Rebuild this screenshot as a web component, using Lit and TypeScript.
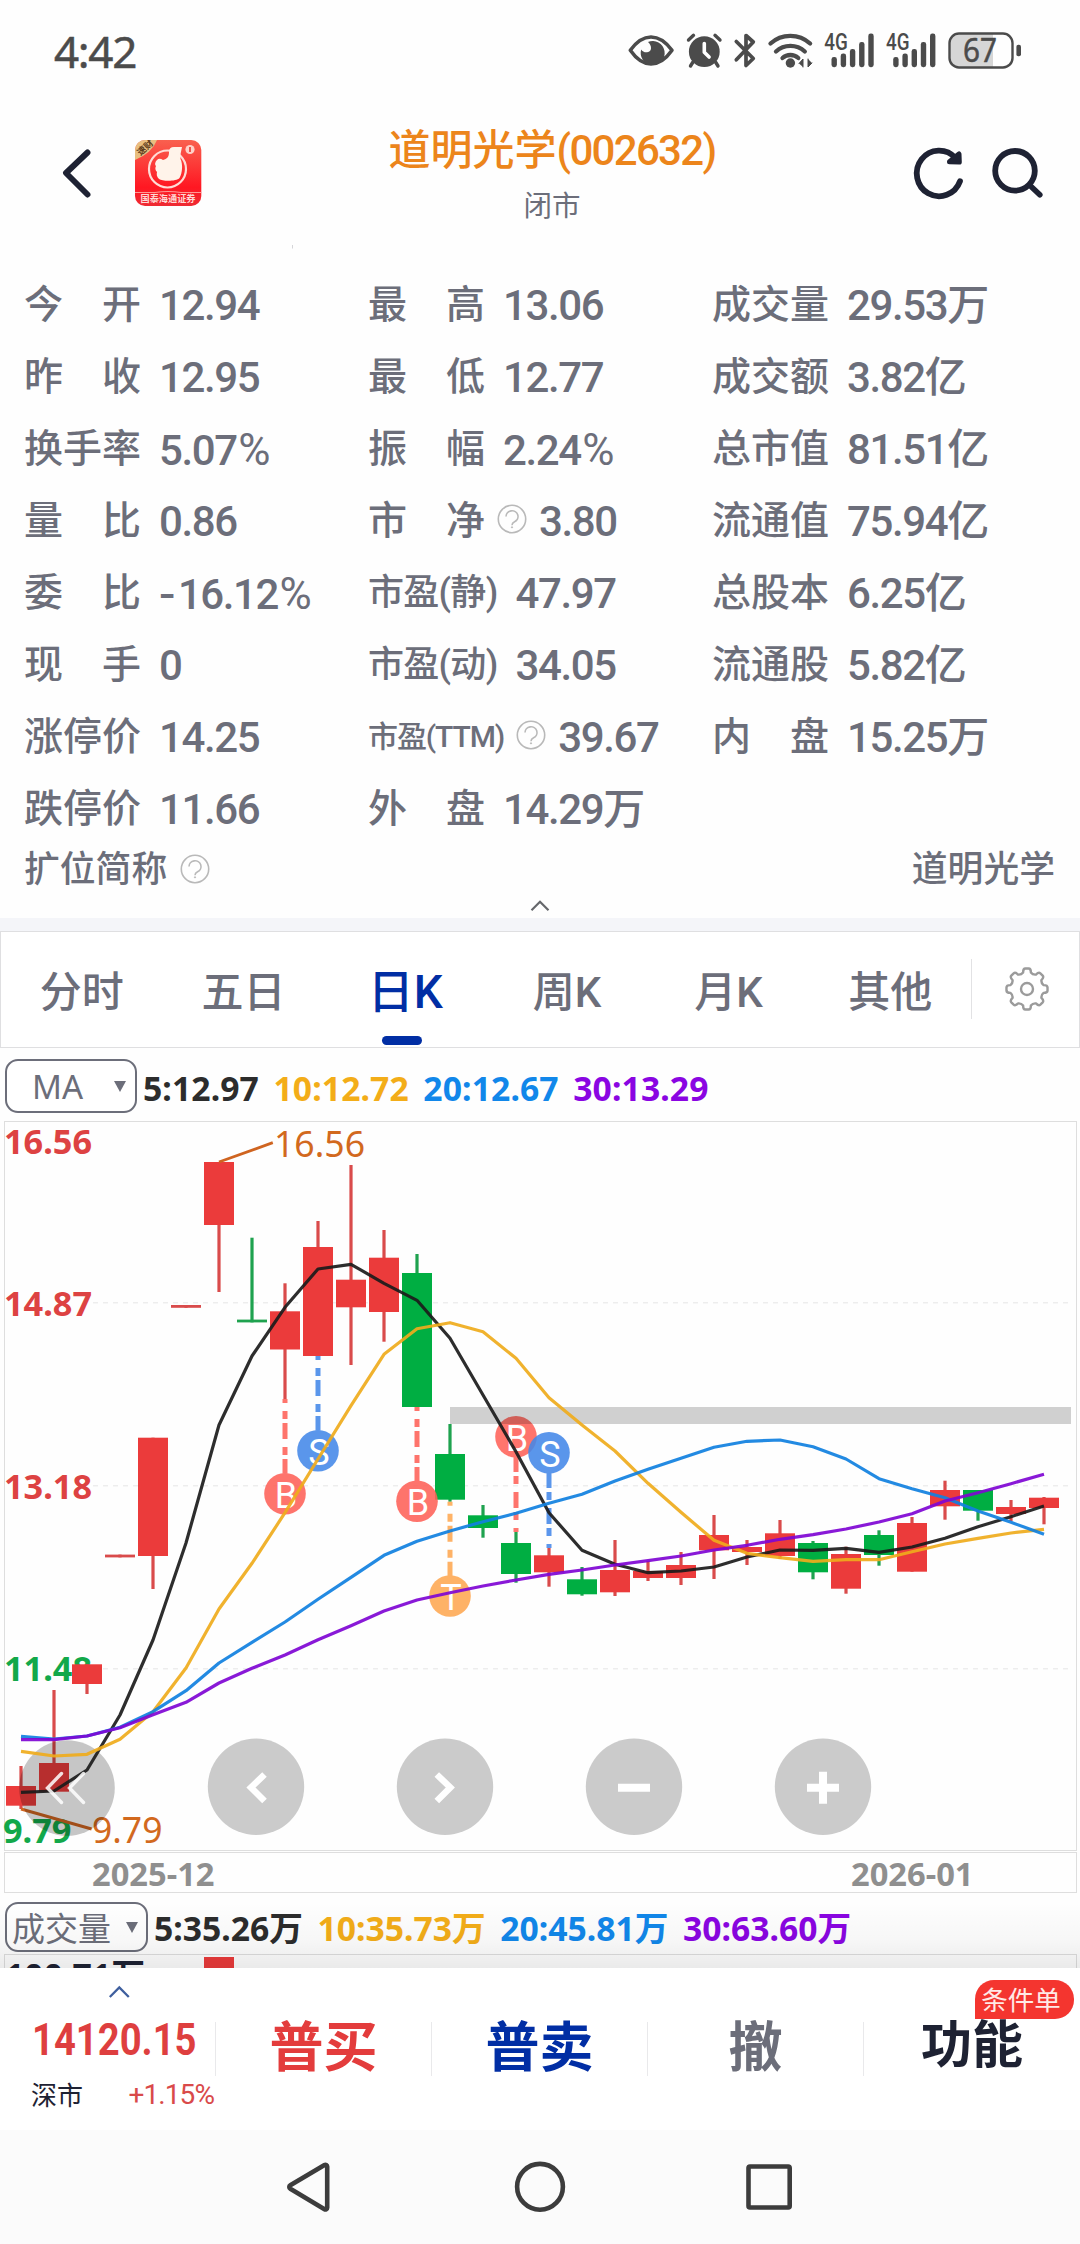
import { LitElement, html, svg, css, nothing } from "lit";
import { customElement, property } from "lit/decorators.js";

type Quote = { label: string; value: string; help?: boolean; size?: "mid" | "small" };

const QUOTES: Quote[][] = [
  [
    { label: "今　开", value: "12.94" },
    { label: "昨　收", value: "12.95" },
    { label: "换手率", value: "5.07%" },
    { label: "量　比", value: "0.86" },
    { label: "委　比", value: "-16.12%" },
    { label: "现　手", value: "0" },
    { label: "涨停价", value: "14.25" },
    { label: "跌停价", value: "11.66" },
  ],
  [
    { label: "最　高", value: "13.06" },
    { label: "最　低", value: "12.77" },
    { label: "振　幅", value: "2.24%" },
    { label: "市　净", value: "3.80", help: true },
    { label: "市盈(静)", value: "47.97", size: "mid" },
    { label: "市盈(动)", value: "34.05", size: "mid" },
    { label: "市盈(TTM)", value: "39.67", help: true, size: "small" },
    { label: "外　盘", value: "14.29万" },
  ],
  [
    { label: "成交量", value: "29.53万" },
    { label: "成交额", value: "3.82亿" },
    { label: "总市值", value: "81.51亿" },
    { label: "流通值", value: "75.94亿" },
    { label: "总股本", value: "6.25亿" },
    { label: "流通股", value: "5.82亿" },
    { label: "内　盘", value: "15.25万" },
  ],
];

const TABS = ["分时", "五日", "日K", "周K", "月K", "其他"];

const RED = "#eb3b3b";
const GREEN = "#00ae42";

/* direction, high, body top, body bottom, low */
const CANDLES: [string, number, number, number, number][] = [
  ["r", 1766, 1786, 1805.7, 1809],
  ["r", 1690, 1763, 1791.7, 1791.7],
  ["r", 1664.3, 1664.3, 1684, 1694],
  ["r", 1554.6, 1554.6, 1557.4, 1557.4],
  ["r", 1437.7, 1437.7, 1556, 1589],
  ["r", 1305, 1305, 1307.8, 1307.8],
  ["r", 1162, 1162, 1225, 1292],
  ["g", 1237.7, 1319.6, 1322.4, 1322.4],
  ["r", 1283.3, 1311.3, 1349.5, 1399],
  ["r", 1221, 1247, 1356, 1356],
  ["r", 1165, 1279.7, 1307.3, 1365],
  ["r", 1230, 1257.7, 1312, 1341.7],
  ["g", 1254, 1273, 1407, 1407],
  ["g", 1424, 1454, 1499.7, 1501.7],
  ["g", 1505, 1515.3, 1528, 1537.7],
  ["g", 1532, 1543, 1574, 1582.7],
  ["r", 1548, 1555.3, 1572.3, 1586.7],
  ["g", 1567, 1579.3, 1594.3, 1595.7],
  ["r", 1540, 1570, 1592.3, 1596],
  ["r", 1561, 1571, 1578, 1581],
  ["r", 1552, 1565, 1578, 1585],
  ["r", 1515, 1535, 1550.3, 1579],
  ["r", 1540, 1547, 1552, 1565],
  ["r", 1520, 1533.3, 1556, 1559],
  ["g", 1541, 1543, 1572.3, 1579.3],
  ["r", 1546.7, 1554, 1588.7, 1593.7],
  ["g", 1530.3, 1535, 1555, 1565.7],
  ["r", 1517, 1523, 1571.7, 1571.7],
  ["r", 1480.7, 1490, 1506.3, 1519.7],
  ["g", 1490, 1490, 1510.7, 1520.7],
  ["r", 1500, 1507, 1514, 1521],
  ["r", 1497, 1497.7, 1508, 1524.3],
];

const AVERAGES: { color: string; ys: number[] }[] = [
  {
    color: "#1b1b1b",
    ys: [1792.3, 1791, 1770, 1715, 1640, 1543, 1425, 1356, 1307.3, 1269, 1264.3, 1283.3, 1300.3, 1338.3, 1395, 1451.7,
      1512.7, 1550.3, 1564.3, 1572.7, 1571, 1567, 1557, 1550, 1550.3, 1548.3, 1552.3, 1547, 1538.3, 1526.7, 1516.7, 1506],
  },
  {
    color: "#efab1c",
    ys: [1751.3, 1756, 1754.3, 1739.3, 1711.7, 1668, 1609, 1563.3, 1512.7, 1459, 1405.7, 1354.3, 1328.7, 1322.7, 1331.7,
      1358.3, 1397.7, 1425, 1451, 1483.3, 1512.3, 1540.3, 1553.3, 1557.7, 1561.3, 1559.7, 1559.7, 1551.7, 1544, 1538.3,
      1533, 1529.3],
  },
  {
    color: "#1080e0",
    ys: [1736.3, 1739, 1736, 1727.3, 1711.7, 1690.7, 1663, 1642.3, 1622, 1599.3, 1577.3, 1555.3, 1541.3, 1531, 1521.7,
      1513.3, 1503.3, 1494.3, 1481, 1469.3, 1458.3, 1447.3, 1441.3, 1440, 1446.7, 1459, 1478.7, 1488.7, 1497.7, 1511,
      1522.3, 1534.3],
  },
  {
    color: "#7f05d4",
    ys: [1739.7, 1739.7, 1736, 1727.7, 1714.7, 1702.3, 1683, 1668.3, 1655, 1639.7, 1625.7, 1611, 1600, 1592.7, 1586,
      1580, 1574.3, 1570, 1565, 1560.7, 1556, 1550, 1545.3, 1539.3, 1534.7, 1529, 1522, 1513.7, 1501, 1492.7, 1483.7,
      1474.3],
  },
];

/* candle index, letter, circle centre, where the dashed stem leaves the candle */
const MARKERS: { i: number; t: string; y: number; from: number; color: string }[] = [
  { i: 8, t: "B", y: 1493.7, from: 1399, color: "#ff6259" },
  { i: 9, t: "S", y: 1450.7, from: 1356, color: "#4488e9" },
  { i: 12, t: "B", y: 1501.3, from: 1407, color: "#ff6259" },
  { i: 13, t: "T", y: 1596, from: 1501.7, color: "#ffa852" },
  { i: 15, t: "B", y: 1436.7, from: 1532, color: "#ff6259" },
  { i: 16, t: "S", y: 1452.7, from: 1548, color: "#4488e9" },
];

const cx = (i: number) => 21 + 33 * i;

@customElement("help-mark")
class HelpMark extends LitElement {
  static styles = css`
    :host { display: block; width: 30px; height: 30px; }
    svg { display: block; }
  `;
  render() {
    return html`<svg width="30" height="30" viewBox="0 0 30 30" fill="none" stroke="#b9b9b9" stroke-width="1.6">
      <circle cx="15" cy="15" r="13.7" />
      <path d="M9 12.6a6 5.8 0 1 1 8.6 5.2c-1.8.9-2.6 1.6-2.6 3.4" />
      <circle cx="15" cy="23.3" r=".6" fill="#b9b9b9" stroke-width="1" />
    </svg>`;
  }
}

@customElement("status-bar")
class StatusBar extends LitElement {
  static styles = css`
    :host { display: flex; justify-content: space-between; height: 102px; color: #4b4b4b; }
    .time { padding-left: 54px; font: 400 44px/102px "Noto Sans", sans-serif; letter-spacing: -1.3px; -webkit-text-stroke: 0.5px #4b4b4b; }
    svg { display: block; }
    .net { font: 500 23px Roboto, sans-serif; }
    .bat { font: 400 32px "Noto Sans", sans-serif; }
  `;
  private bars(x: number) {
    const tops = [57, 53.5, 49, 42, 33.5];
    return svg`<g fill="#4b4b4b">
      <text class="net" x=${x} y="50" textLength="23.5" lengthAdjust="spacingAndGlyphs">4G</text>
      ${tops.map((t, i) => svg`<rect x=${x + 7.2 + i * 9.2} y=${t} width="5.4" height=${67.2 - t} rx="2.4" />`)}
    </g>`;
  }
  render() {
    return html`
      <div class="time">4:42</div>
      <svg width="460" height="102" viewBox="620 0 460 102" fill="none" stroke="#4b4b4b" stroke-linecap="round" stroke-linejoin="round">
        <path d="M630.3 50.3C637 41 644 37 651 37s14.200 4 21 13.300C665.200 60 658 64 651 64s-14-4-20.700-13.700z" stroke-width="3.600" />
        <path d="M648 42a12 12 0 1 1-6.800 7.500c2 4 9.800 4 9.800-1.500 0-2.500-1.200-4.500-3-6z" fill="#4b4b4b" stroke="none" />
        <circle cx="704.3" cy="51.700" r="15.400" fill="#4b4b4b" stroke="none" />
        <path d="M688.500 40l5-4.700M720 40l-5-4.700M693 62l-2.500 4M715.500 62l2.500 4" stroke-width="3.400" />
        <path d="M704.300 43.500v8.800l4.800 4.700" stroke="#fff" stroke-width="3.600" />
        <path d="M736.300 41.500l17 17-7.300 7V35.500l7.300 6.500-17 17.800" stroke-width="3.700" />
        <path d="M770.500 43.500c11-10.300 28.600-10.300 39.600 0M776 51.500c8-7.500 20.800-7.500 28.800 0M782.500 58c4.500-4 11.300-4 15.800 0" stroke-width="4.300" />
        <circle cx="790.400" cy="63" r="4.700" fill="#4b4b4b" stroke="none" />
        <path d="M799 63.500l4-4.500v8M812 63l-4 4v-8" fill="#4b4b4b" stroke-width="1" />
        <g stroke="none">${this.bars(824.3)}${this.bars(886)}</g>
        <path d="M959 34h34v33h-34a9 9 0 0 1-9-9V43a9 9 0 0 1 9-9z" fill="#d6d6d6" stroke="none" />
        <rect x="949.500" y="33.500" width="63" height="34" rx="9.500" stroke-width="2.400" />
        <rect x="1016.400" y="44.700" width="4.600" height="11.600" rx="2" fill="#4b4b4b" stroke="none" />
        <text class="bat" x="963" y="62" fill="#4b4b4b" stroke-width=".5" textLength="34" lengthAdjust="spacingAndGlyphs">67</text>
      </svg>`;
  }
}

@customElement("title-bar")
class TitleBar extends LitElement {
  static styles = css`
    :host { display: grid; grid-template-columns: 360px 384px 336px; height: 158px; font-family: Roboto, "Noto Sans CJK SC", sans-serif; }
    svg { display: block; }
    .mid { display: flex; flex-direction: column; align-items: center; }
    .name { margin-top: 23px; font-size: 42px; line-height: 52px; color: #ec851b; font-weight: 500; white-space: nowrap; }
    .code { letter-spacing: -1.7px; }
    .state { margin-top: 15px; font-size: 28.500px; line-height: 30px; color: #6c6e7a; }
    .mini { font: 700 9.500px "Noto Sans CJK SC", sans-serif; }
    .tag { font: 700 9px "Noto Sans CJK SC", sans-serif; }
  `;
  render() {
    return html`
      <svg width="360" height="158" viewBox="0 102 360 158" fill="none">
        <path d="M87.500 152.500L66 173l21.500 21.500" stroke="#1e2233" stroke-width="5.900" stroke-linecap="round" stroke-linejoin="round" />
        <defs>
          <linearGradient id="lg" x1="0" y1="0" x2="0" y2="1">
            <stop offset="0" stop-color="#f9604f" /><stop offset=".72" stop-color="#ff1722" /><stop offset="1" stop-color="#ee2b33" />
          </linearGradient>
          <clipPath id="lc"><rect x="135" y="140" width="66.300" height="66" rx="10" /></clipPath>
        </defs>
        <g clip-path="url(#lc)">
          <rect x="135" y="140" width="67" height="66" fill="url(#lg)" />
          <circle cx="167.500" cy="169" r="18.500" stroke="#ffdcd6" stroke-width="2.200" />
          <path d="M157 160c2-2 4-1 6 0 4-1 6-3 6-8q0-5 5-5h8c-1 5-2 8-1.500 12 2.500 5 2 14-1 19-3 3.500-17 3.500-20.500 1-2.500-2-2.500-5-2-7-2-2-2-4-1-6-2-2 0-5 1-6z" fill="#fff3ea" />
          <circle cx="190" cy="149.500" r="4.600" fill="#ffd0c8" />
          <path d="M190 147v5" stroke="#f0524a" stroke-width="2" />
          <path d="M135 192.500h20q13-2 26 0h21" stroke="#ff9a94" stroke-width="1.200" />
          <path d="M135 140h22q-5 13-22 20z" fill="#e8bf80" />
          <text class="tag" transform="translate(140.500 156) rotate(-42)" fill="#5e3c1c">速财</text>
          <text class="mini" x="140.500" y="202" fill="#ffd9d6" textLength="55" lengthAdjust="spacingAndGlyphs">国泰海通证券</text>
        </g>
        <path d="M292.500 245v3.500" stroke="#d5d5d8" stroke-width="1" />
      </svg>
      <div class="mid">
        <div class="name">道明光学<span class="code">(002632)</span></div>
        <div class="state">闭市</div>
      </div>
      <svg width="336" height="158" viewBox="744 102 336 158" fill="none" stroke="#1e2233" stroke-linecap="round" stroke-linejoin="round">
        <path d="M955.500 158A22.300 22.800 0 1 0 960 181.300" stroke-width="5.800" />
        <path d="M959 154l.300 8-9.800-.2z" fill="#1e2233" stroke-width="5" />
        <ellipse cx="1015" cy="170.800" rx="19.800" ry="19.800" stroke-width="5.800" />
        <path d="M1030 185.500l9.800 9.300" stroke-width="5.600" />
      </svg>`;
  }
}

@customElement("quote-panel")
class QuotePanel extends LitElement {
  static styles = css`
    :host { display: block; height: 658px; color: #6c6e7a; font-family: Roboto, "Noto Sans CJK SC", sans-serif; }
    .cols { display: grid; grid-template-columns: 344px 344px 1fr; height: 576px; padding: 9px 0 0 24px; }
    .row { display: flex; align-items: center; height: 72px; white-space: nowrap; }
    .label { font-size: 39px; line-height: 72px; font-weight: 500; }
    .label.mid { font-size: 36px; letter-spacing: -0.700px; }
    .label.small { font-size: 30px; letter-spacing: -1.100px; }
    .value { margin-left: 18px; font-size: 42px; line-height: 72px; font-weight: 500; letter-spacing: -1.400px; padding-top: 2px; }
    .minus { display: inline-block; margin-right: 6px; transform: scaleX(1.15); transform-origin: left; }
    .pc { font-size: 44px; font-weight: 400; margin-left: 1.500px; }
    .cols help-mark { margin: -4px -6px 0 12px; }
    .full { display: flex; align-items: center; justify-content: space-between; height: 50px; padding: 0 25px 0 24px; font-size: 35.800px; font-weight: 500; line-height: 50px; }
    .full .key { display: flex; align-items: center; }
    .full help-mark { margin: -3px 0 0 13px; }
    .fold { display: flex; justify-content: center; height: 23px; }
    svg { display: block; }
  `;
  private number(v: string) {
    const minus = v.startsWith("-");
    const pc = v.endsWith("%");
    const core = v.replace(/[-%]/g, "");
    return html`${minus ? html`<span class="minus">-</span>` : nothing}${core}${pc ? html`<span class="pc">%</span>` : nothing}`;
  }
  render() {
    return html`
      <div class="cols">
        ${QUOTES.map((col) => html`<div>${col.map((q) => html`
          <div class="row">
            <span class="label ${q.size ?? ""}">${q.label}</span>
            ${q.help ? html`<help-mark></help-mark>` : nothing}
            <span class="value">${this.number(q.value)}</span>
          </div>`)}</div>`)}
      </div>
      <div class="full"><span class="key">扩位简称<help-mark></help-mark></span><span>道明光学</span></div>
      <div class="fold">
        <svg width="24" height="23" viewBox="0 2 24 23"><path d="M3.500 17.200L12 8.700l8.500 8.500" fill="none" stroke="#66686c" stroke-width="2.200" /></svg>
      </div>`;
  }
}

@customElement("period-tabs")
class PeriodTabs extends LitElement {
  static styles = css`
    :host { display: flex; box-sizing: border-box; height: 130px; border-top: 13px solid #f4f5f9; background: #fff; }
    .box { flex: 1; display: flex; border: 1.500px solid #dfdfe1; box-sizing: border-box; }
    .tab { position: relative; flex: 0 0 161.700px; text-align: center; font: 500 42px/121px Roboto, "Noto Sans CJK SC", sans-serif; color: #6c6e7a; }
    .tab.on { font-size: 46px; font-weight: 500; color: #012ea4; line-height: 121px; }
    .tab.on::after { content: ""; position: absolute; left: 58px; bottom: 2.500px; width: 40px; height: 9px; border-radius: 5px; background: #012ea4; }
    .gear { flex: 1; display: flex; align-items: center; height: 60px; margin-top: 27px; border-left: 1px solid #e2e2e4; }
    svg { display: block; margin-left: 30.500px; }
  `;
  private gearPath() {
    const pts: string[] = [];
    const c = 24;
    for (let k = 0; k < 8; k++) {
      const a = (k * Math.PI) / 4 - Math.PI / 2;
      const p = (r: number, d: number) => `${(c + r * Math.cos(a + d)).toFixed(2)} ${(c + r * Math.sin(a + d)).toFixed(2)}`;
      pts.push(`${k ? "L" : "M"}${p(17, -0.23)} Q${p(20.8, -0.19)} ${p(20.6, -0.08)} L${p(20.6, 0.08)} Q${p(20.8, 0.19)} ${p(17, 0.23)} Q${p(15.2, 0.39)} ${p(17, 0.555)}`);
    }
    return pts.join(" ") + "Z";
  }
  render() {
    return html`<div class="box">
      ${TABS.map((t) => html`<div class="tab ${t === "日K" ? "on" : ""}">${t}</div>`)}
      <div class="gear">
        <svg width="48" height="48" viewBox="0 0 48 48" fill="none" stroke="#9b9b9b" stroke-width="2.400" stroke-linejoin="round">
          <path d=${this.gearPath()} /><circle cx="24" cy="24" r="6" />
        </svg>
      </div>
    </div>`;
  }
}

@customElement("legend-row")
class LegendRow extends LitElement {
  @property() name = "";
  @property({ type: Array }) items: string[] = [];
  static styles = css`
    :host { display: flex; align-items: center; box-sizing: border-box; padding-left: 5px; }
    .select { display: flex; align-items: center; justify-content: space-between; box-sizing: border-box; height: 54px; border: 2px solid #6c6e7a; border-radius: 13px; color: #6c6e7a; font: 400 34px/50px "Noto Sans", "Noto Sans CJK SC", sans-serif; background: #fff; }
    .ma { width: 132px; padding: 2px 9px 0 25px; font-size: 33px; }
    .vol { width: 143px; height: 50px; padding: 0 8px 0 5px; font: 400 33px/46px "Noto Sans CJK SC", sans-serif; }
    .arrow { border: solid transparent; border-width: 11px 6.500px 0; border-top-color: #6c6e7a; }
    .items { display: flex; gap: 14.500px; padding: 4px 0 0 6px; font: 700 33.700px/50px "Noto Sans", "Noto Sans CJK SC", sans-serif; letter-spacing: 0.100px; white-space: nowrap; }
    .c0 { color: #2c2c2c; }
    .c1 { color: #f3ad18; }
    .c2 { color: #1187ea; }
    .c3 { color: #8a05e2; }
    .vol + .items { padding-top: 2px; letter-spacing: 0; }
  `;
  render() {
    const ma = this.name === "MA";
    return html`
      <div class="select ${ma ? "ma" : "vol"}"><span>${this.name}</span><i class="arrow"></i></div>
      <div class="items">${this.items.map((t, i) => html`<span class="c${i}">${t}</span>`)}</div>`;
  }
}

@customElement("k-chart")
class KChart extends LitElement {
  static styles = css`
    :host { display: block; height: 774px; }
    svg { display: block; }
    .axis { font: 700 33.700px "Noto Sans", sans-serif; }
    .note { font: 400 36.500px "Noto Sans", sans-serif; }
    .mark { font: 400 36px Roboto, sans-serif; text-anchor: middle; }
    .date { font: 700 32px "Noto Sans", sans-serif; }
  `;
  private label(text: string, x: number, y: number, w: number, color: string, cls = "axis") {
    return svg`<text class=${cls} x=${x} y=${y} fill=${color} textLength=${w} lengthAdjust="spacingAndGlyphs">${text}</text>`;
  }
  private candle(c: [string, number, number, number, number], i: number) {
    const [d, high, top, bottom, low] = c;
    const color = d === "r" ? RED : GREEN;
    const wick = d === "r" ? "#d94b4b" : "#1fa24f";
    return svg`
      ${low > high ? svg`<rect x=${cx(i) - 1.6} y=${high} width="3.2" height=${low - high} fill=${wick} />` : nothing}
      <rect x=${cx(i) - 15} y=${top} width="30" height=${bottom - top} fill=${bottom - top < 4 ? wick : color} />`;
  }
  private marker(m: (typeof MARKERS)[number]) {
    const x = cx(m.i);
    const end = m.y > m.from ? m.y - 20 : m.y + 20;
    return svg`<g opacity=".88">
      <path d="M${x} ${m.from}V${end}" stroke=${m.color} stroke-width="5" stroke-dasharray="16 8 8 4" stroke-dashoffset="12" />
      <circle cx=${x} cy=${m.y} r="20.800" fill=${m.color} />
    </g>
    <text class="mark" x=${x + 1} y=${m.y + 14} fill="#fff">${m.t}</text>`;
  }
  render() {
    return html`<svg width="1080" height="774" viewBox="0 1120 1080 774" fill="none">
      <g stroke="#dedede" stroke-width="1">
        <rect x="4.500" y="1121.500" width="1072" height="729" />
        <rect x="4.500" y="1852.500" width="1072" height="40" />
      </g>
      <path d="M93 1302.700H1072M93 1485.700H1072M93 1668.700H1072" stroke="#ededed" stroke-width="1.600" stroke-dasharray="5 5" />
      ${this.label("16.56", 4, 1154, 88, "#dd4242")}
      ${this.label("14.87", 4, 1316, 88, "#dd4242")}
      ${this.label("13.18", 4, 1499, 88, "#dd4242")}
      ${this.label("11.48", 4, 1681.3, 88, "#12a84a")}
      ${this.label("9.79", 3, 1843, 68.5, "#12a84a")}
      ${CANDLES.map((c, i) => this.candle(c, i))}
      ${MARKERS.map((m) => this.marker(m))}
      <rect x="450" y="1407" width="621" height="17" fill="#000" fill-opacity=".18" />
      <path d="M219 1162L272.800 1142.700M21 1809L91.600 1829" stroke="#cf6420" stroke-width="2.900" />
      ${this.label("16.56", 274, 1157, 91, "#d2691e", "note")}
      ${this.label("9.79", 92, 1842.500, 70.5, "#d2691e", "note")}
      <circle cx="67" cy="1788" r="47.800" fill="#000" fill-opacity=".22" />
      ${AVERAGES.map((a) => svg`<polyline points=${a.ys.map((y, i) => `${cx(i)},${y}`).join(" ")} stroke=${a.color} stroke-width="3.200" stroke-opacity=".92" stroke-linejoin="round" />`)}
      <g fill="#cbcbcb">
        ${[256, 445, 634, 823].map((x) => svg`<circle cx=${x} cy="1786.800" r="48.200" />`)}
      </g>
      <g stroke="#fff" stroke-width="3.400" stroke-opacity=".85" stroke-linecap="round">
        <path d="M61.500 1773.500L47.500 1788l14 14.500M83.500 1773.500L69.500 1788l14 14.500" />
      </g>
      <g stroke="#fff" stroke-width="6.500">
        <path d="M264.500 1774.500L251 1787.500l13.500 13.500M436.800 1774.500l13.500 13-13.500 13.500" />
        <path d="M618 1787.800h32M807 1787.800h32M823 1771.700v32" stroke-width="8" />
      </g>
      ${this.label("2025-12", 92, 1885.500, 122.500, "#8f8f8f", "date")}
      ${this.label("2026-01", 851, 1885.500, 122.500, "#8f8f8f", "date")}
    </svg>`;
  }
}

@customElement("volume-strip")
class VolumeStrip extends LitElement {
  static styles = css`
    :host { display: block; position: relative; height: 74px; overflow: hidden; }
    legend-row { height: 60px; padding-top: 6px; }
    svg { display: block; }
    .t { font: 700 33.700px "Noto Sans", "Noto Sans CJK SC", sans-serif; }
    .shade { position: absolute; inset: 0; background: linear-gradient(to bottom, rgba(0,0,0,0) 0, rgba(0,0,0,0) 12%, rgba(0,0,0,.03) 65%, rgba(0,0,0,.08) 100%); }
  `;
  render() {
    return html`
      <legend-row name="成交量" .items=${["5:35.26万", "10:35.73万", "20:45.81万", "30:63.60万"]}></legend-row>
      <svg width="1080" height="30" viewBox="0 1954 1080 30" fill="none">
        <rect x="4.500" y="1954.500" width="1072" height="60" stroke="#dedede" />
        <rect x="204" y="1957" width="30" height="40" fill="#eb3b3b" />
        <text class="t" x="5" y="1987.500" fill="#1e2233" textLength="140" lengthAdjust="spacingAndGlyphs">100.71万</text>
      </svg>
      <div class="shade"></div>`;
  }
}

@customElement("trade-bar")
class TradeBar extends LitElement {
  static styles = css`
    :host { display: grid; grid-template-columns: 215px repeat(3, 216px) 217px; height: 162px; background: #fff; font-family: "Noto Sans CJK SC", sans-serif; }
    .cell { position: relative; height: 54px; margin-top: 54px; border-left: 1.500px solid #e9e9eb; text-align: center; font-size: 54px; font-weight: 700; line-height: 43px; box-sizing: border-box; }
    .buy { color: #e33c3c; }
    .sell { color: #012ea4; }
    .undo { color: #6c6e7a; }
    .more { color: #1e2233; font-size: 51px; line-height: 38px; }
    .index { display: flex; flex-direction: column; }
    .index svg { display: block; margin: 17px 0 0 108px; }
    .num { margin: 15px 0 0 32px; height: 50px; width: 183px; font: 700 44px/52px Roboto, sans-serif; color: #de3f3f; transform: scaleX(.868); transform-origin: left; white-space: nowrap; }
    .sub { display: flex; justify-content: space-between; margin-top: 17px; padding: 0 1px 0 31px; font-size: 26px; line-height: 26px; color: #1e2233; }
    .pct { font: 400 28px/28px Roboto, sans-serif; color: #d94a4a; letter-spacing: -0.900px; }
    .badge { position: absolute; left: 110.500px; top: -42px; width: 99px; height: 39px; border-radius: 19px 19px 19px 0; background: #f4352f; color: #ffe9e6; font-size: 26.500px; font-weight: 400; line-height: 38px; box-sizing: border-box; padding-right: 6px; z-index: 1; }
  `;
  render() {
    return html`
      <div class="index">
        <svg width="23" height="14" viewBox="0 0 23 14"><path d="M1.800 12L11.300 2.500l9.500 9.500" fill="none" stroke="#3f5f9e" stroke-width="2.300" /></svg>
        <div class="num">14120.15</div>
        <div class="sub"><span>深市</span><span class="pct">+1.15%</span></div>
      </div>
      <div class="cell buy">普买</div>
      <div class="cell sell">普卖</div>
      <div class="cell undo">撤</div>
      <div class="cell more">功能<span class="badge">条件单</span></div>`;
  }
}

@customElement("nav-keys")
class NavKeys extends LitElement {
  static styles = css`
    :host { display: block; height: 114px; background: #fbfbfb; }
    svg { display: block; }
  `;
  render() {
    return html`<svg width="1080" height="114" viewBox="0 2130 1080 114" fill="none" stroke="#3c3c3c" stroke-width="4.600" stroke-linejoin="round">
      <path d="M327.200 2166.500v41.200a1.800 1.800 0 0 1-2.700 1.500L290.300 2188.800a2.100 2.100 0 0 1 0-3.600L324.500 2165a1.800 1.800 0 0 1 2.700 1.500z" />
      <circle cx="540" cy="2186.800" r="22.900" />
      <rect x="748.500" y="2166.500" width="41.200" height="41" rx="1.500" />
    </svg>`;
  }
}

@customElement("app-root")
class AppRoot extends LitElement {
  static styles = css`
    :host { display: flex; flex-direction: column; width: 1080px; height: 2244px; overflow: hidden; background: #fefefe; }
    .ma-row { height: 72px; padding-top: 3px; }
    main { display: flex; flex-direction: column; }
  `;
  render() {
    return html`
      <status-bar></status-bar>
      <title-bar></title-bar>
      <main>
        <quote-panel></quote-panel>
        <period-tabs></period-tabs>
        <legend-row class="ma-row" name="MA" .items=${["5:12.97", "10:12.72", "20:12.67", "30:13.29"]}></legend-row>
        <k-chart></k-chart>
        <volume-strip></volume-strip>
      </main>
      <trade-bar></trade-bar>
      <nav-keys></nav-keys>`;
  }
}
